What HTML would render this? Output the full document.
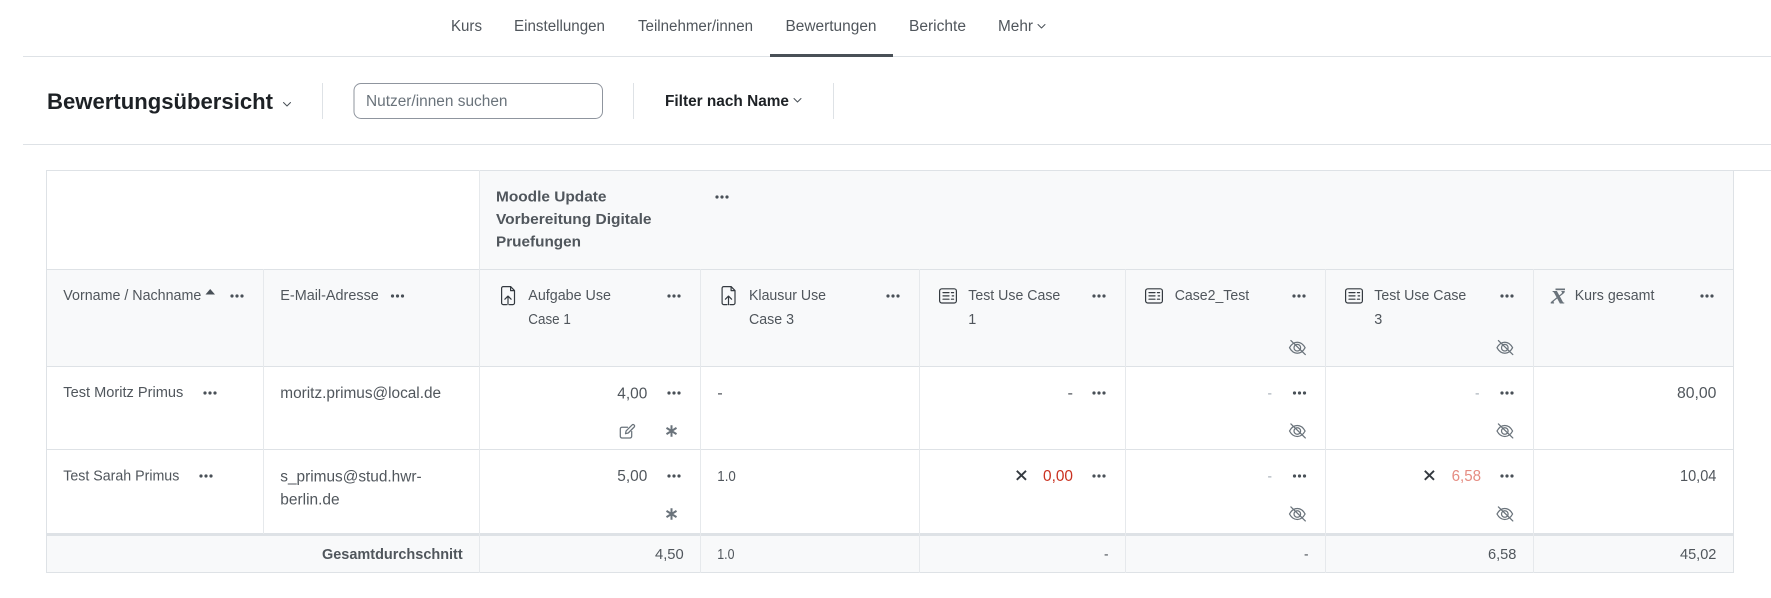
<!DOCTYPE html>
<html lang="de"><head><meta charset="utf-8"><title>Bewertungsübersicht</title>
<style>
html,body{margin:0;padding:0;width:1771px;height:598px;overflow:hidden;background:#fff}
svg{display:block}
text{font-family:"Liberation Sans",sans-serif;fill:#50565c;font-size:15.4px}
.n{font-size:15.4px;fill:#50565c}
.h{font-size:14.4px}
.f{font-size:14.4px}
.b{font-weight:bold}
.ic{fill:none;stroke:#343a40;stroke-width:1.2;stroke-linecap:round;stroke-linejoin:round}
.gr{fill:none;stroke:#6a737b;stroke-width:1.25;stroke-linecap:round;stroke-linejoin:round}
</style></head><body>
<svg width="1771" height="598" viewBox="0 0 1771 598" xmlns="http://www.w3.org/2000/svg">
<defs>
<g id="d"><circle cx="2" cy="0" r="1.6" fill="#495057"/><circle cx="7" cy="0" r="1.6" fill="#495057"/><circle cx="12" cy="0" r="1.6" fill="#495057"/></g>
<g id="up" class="ic"><path d="M5.500 18.600H2.200A1.600 1.600 0 0 1 .6 17V2.200A1.600 1.600 0 0 1 2.200.6h7.400l3.900 4V17a1.600 1.600 0 0 1-1.600 1.600H8.500"/><path d="M9.600.8v3.800h3.700"/><path d="M7 18.600V10.400M3.900 13.200 7 10.100l3.100 3.100"/></g>
<g id="q" class="ic"><rect x=".6" y=".6" width="16.800" height="14.200" rx="2.200"/><path d="M4 4.400h6M4 7.700h6M4 11h6M12.400 4.400h2.200M13.200 7.700h1.400M12.400 11h2.200"/></g>
<g id="e" class="gr"><path d="M1 7.500C3 3.800 5.800 2 8.800 2s5.800 1.800 7.800 5.500c-2 3.700-4.800 5.500-7.800 5.500S3 11.200 1 7.500z"/><circle cx="8.800" cy="7.500" r="3.300"/><path d="M2.400.4 16.800 14.400"/></g>
<g id="a" fill="none" stroke="#6a737b" stroke-width="2"><path d="M5.500 -.4V11M.5 2.200 10.500 8.400M10.500 2.200.5 8.400"/></g>
<g id="c" fill="none" stroke="#495057" stroke-width="1" stroke-linecap="round" stroke-linejoin="round"><path d="M0 0 3.500 3.500 7 0"/></g>
</defs>

<!-- nav -->
<rect x="23" y="56" width="1748" height="1" fill="#dee2e6"/>
<rect x="770" y="54" width="123" height="3" fill="#495057"/>
<text class="n" x="451" y="31" textLength="31" lengthAdjust="spacingAndGlyphs">Kurs</text>
<text class="n" x="514" y="31" textLength="91" lengthAdjust="spacingAndGlyphs">Einstellungen</text>
<text class="n" x="638" y="31" textLength="115" lengthAdjust="spacingAndGlyphs">Teilnehmer/innen</text>
<text class="n" x="785.500" y="31" textLength="91" lengthAdjust="spacingAndGlyphs">Bewertungen</text>
<text class="n" x="909" y="31" textLength="57" lengthAdjust="spacingAndGlyphs">Berichte</text>
<text class="n" x="998" y="31" textLength="35" lengthAdjust="spacingAndGlyphs">Mehr</text>
<use href="#c" x="1038" y="24.500"/>

<!-- toolbar -->
<rect x="23" y="144" width="1748" height="1" fill="#dee2e6"/>
<text x="47" y="109" textLength="226" lengthAdjust="spacingAndGlyphs" class="b" style="font-size:22.600px;fill:#1d2125">Bewertungsübersicht</text>
<use href="#c" x="283.500" y="102.500"/>
<rect x="322" y="83" width="1" height="36" fill="#dee2e6"/>
<rect x="354" y="83.500" width="248.500" height="35" rx="7" fill="#fff" stroke="#8f959e" stroke-width="1"/>
<text x="366" y="106" textLength="141.500" lengthAdjust="spacingAndGlyphs" style="font-size:15.400px;fill:#6a737b">Nutzer/innen suchen</text>
<rect x="633" y="83" width="1" height="36" fill="#dee2e6"/>
<text x="665" y="106" textLength="124" lengthAdjust="spacingAndGlyphs" class="b" style="font-size:15.400px;fill:#1d2125">Filter nach Name</text>
<use href="#c" x="794" y="98.500"/>
<rect x="833" y="83" width="1" height="36" fill="#dee2e6"/>

<!-- table backgrounds -->
<rect x="480" y="171" width="1253" height="99" fill="#f8f9fa"/>
<rect x="47" y="270" width="1686" height="96" fill="#f8f9fa"/>
<rect x="47" y="536" width="1686" height="36" fill="#f8f9fa"/>

<!-- table lines -->
<rect x="46" y="170" width="1725" height="1" fill="#dee2e6"/>
<rect x="46" y="269" width="1688" height="1" fill="#dee2e6"/>
<rect x="46" y="366" width="1688" height="1" fill="#dee2e6"/>
<rect x="46" y="449" width="1688" height="1" fill="#dee2e6"/>
<rect x="46" y="533" width="1688" height="3" fill="#dee2e6"/>
<rect x="46" y="572" width="1688" height="1" fill="#dee2e6"/>
<rect x="46" y="170" width="1" height="403" fill="#dee2e6"/>
<rect x="1733" y="170" width="1" height="403" fill="#dee2e6"/>
<rect x="479" y="170" width="1" height="403" fill="#e6e9ec"/>
<rect x="263" y="269" width="1" height="265" fill="#e6e9ec"/>
<rect x="700" y="269" width="1" height="304" fill="#e6e9ec"/>
<rect x="919" y="269" width="1" height="304" fill="#e6e9ec"/>
<rect x="1125" y="269" width="1" height="304" fill="#e6e9ec"/>
<rect x="1325" y="269" width="1" height="304" fill="#e6e9ec"/>
<rect x="1533" y="269" width="1" height="304" fill="#e6e9ec"/>

<!-- category header -->
<text class="h b" x="496" y="201.500" textLength="110.500" lengthAdjust="spacingAndGlyphs">Moodle Update</text>
<text class="h b" x="496" y="224" textLength="155.500" lengthAdjust="spacingAndGlyphs">Vorbereitung Digitale</text>
<text class="h b" x="496" y="246.500" textLength="85" lengthAdjust="spacingAndGlyphs">Pruefungen</text>
<use href="#d" x="715" y="197"/>

<!-- column headers -->
<text class="h" x="63.300" y="300" textLength="138" lengthAdjust="spacingAndGlyphs">Vorname / Nachname</text>
<path d="M205.500 294.500 210.200 289 215 294.500z" fill="#495057"/>
<use href="#d" x="230" y="296"/>
<text class="h" x="280.300" y="300" textLength="98.500" lengthAdjust="spacingAndGlyphs">E-Mail-Adresse</text>
<use href="#d" x="390.500" y="296"/>

<use href="#up" x="501" y="286"/>
<text class="h" x="528.300" y="300" textLength="82.700" lengthAdjust="spacingAndGlyphs">Aufgabe Use</text>
<text class="h" x="528.300" y="324" textLength="42.500" lengthAdjust="spacingAndGlyphs">Case 1</text>
<use href="#d" x="667" y="296"/>

<use href="#up" x="721.500" y="286"/>
<text class="h" x="749" y="300" textLength="77" lengthAdjust="spacingAndGlyphs">Klausur Use</text>
<text class="h" x="749" y="324" textLength="45" lengthAdjust="spacingAndGlyphs">Case 3</text>
<use href="#d" x="886" y="296"/>

<use href="#q" x="939" y="288.200"/>
<text class="h" x="968.300" y="300" textLength="92" lengthAdjust="spacingAndGlyphs">Test Use Case</text>
<text class="h" x="968.300" y="324">1</text>
<use href="#d" x="1092" y="296"/>

<use href="#q" x="1145" y="288.200"/>
<text class="h" x="1174.700" y="300" textLength="74.500" lengthAdjust="spacingAndGlyphs">Case2_Test</text>
<use href="#d" x="1292" y="296"/>
<use href="#e" x="1288.500" y="340.200"/>

<use href="#q" x="1345" y="288.200"/>
<text class="h" x="1374.300" y="300" textLength="92" lengthAdjust="spacingAndGlyphs">Test Use Case</text>
<text class="h" x="1374.300" y="324">3</text>
<use href="#d" x="1500" y="296"/>
<use href="#e" x="1496" y="340.200"/>

<text x="1551" y="303.500" textLength="14.500" lengthAdjust="spacingAndGlyphs" style="font-family:'Liberation Serif',serif;font-style:italic;font-weight:bold;font-size:27px;fill:#6a737b">x</text>
<rect x="1555.500" y="288.500" width="9.500" height="1.700" fill="#6a737b"/>
<text class="h" x="1574.700" y="300" textLength="79.700" lengthAdjust="spacingAndGlyphs">Kurs gesamt</text>
<use href="#d" x="1700" y="296"/>

<!-- row 1 -->
<text class="h" x="63.300" y="397" textLength="120" lengthAdjust="spacingAndGlyphs">Test Moritz Primus</text>
<use href="#d" x="203" y="393"/>
<text class="n" x="280.300" y="398" textLength="160.800" lengthAdjust="spacingAndGlyphs">moritz.primus@local.de</text>
<text class="n" x="617.300" y="398.300" textLength="30" lengthAdjust="spacingAndGlyphs">4,00</text>
<use href="#d" x="667" y="393"/>
<g class="gr"><path d="M627.500 427.200h-5.500a1.700 1.700 0 0 0-1.700 1.700v7.400a1.700 1.700 0 0 0 1.700 1.700h8a1.700 1.700 0 0 0 1.700-1.700v-4.800"/><path d="M625.500 433.700l.6-2.800 6-6a1.300 1.300 0 0 1 1.900 0l.2.200a1.300 1.300 0 0 1 0 1.900l-6 6z"/></g>
<use href="#a" x="666" y="425.700"/>
<text class="n" x="717.300" y="398" textLength="5.500" lengthAdjust="spacingAndGlyphs">-</text>
<text class="n" x="1067.500" y="398" textLength="5.500" lengthAdjust="spacingAndGlyphs">-</text>
<use href="#d" x="1092" y="393"/>
<text class="n" x="1267.500" y="398" textLength="4.500" lengthAdjust="spacingAndGlyphs" style="fill:#adb5bd">-</text>
<use href="#d" x="1292.500" y="393"/>
<use href="#e" x="1288.500" y="423.500"/>
<text class="n" x="1475" y="398" textLength="4.500" lengthAdjust="spacingAndGlyphs" style="fill:#adb5bd">-</text>
<use href="#d" x="1500" y="393"/>
<use href="#e" x="1496" y="423.500"/>
<text class="n" x="1677" y="398" textLength="39.400" lengthAdjust="spacingAndGlyphs">80,00</text>

<!-- row 2 -->
<text class="h" x="63.300" y="480.500" textLength="116" lengthAdjust="spacingAndGlyphs">Test Sarah Primus</text>
<use href="#d" x="199" y="476"/>
<text class="n" x="280.300" y="481.500" textLength="141.300" lengthAdjust="spacingAndGlyphs">s_primus@stud.hwr-</text>
<text class="n" x="280.300" y="504.500" textLength="59.300" lengthAdjust="spacingAndGlyphs">berlin.de</text>
<text class="n" x="617.300" y="481" textLength="30" lengthAdjust="spacingAndGlyphs">5,00</text>
<use href="#d" x="667" y="476"/>
<use href="#a" x="666" y="508.700"/>
<text class="h" x="717.300" y="481" textLength="18.500" lengthAdjust="spacingAndGlyphs" style="font-size:15px">1.0</text>
<path d="M1016.800 470.800 1026 479.800M1026 470.800 1016.800 479.800" stroke="#343a40" stroke-width="1.900" fill="none"/>
<text class="n" x="1043" y="481" textLength="30" lengthAdjust="spacingAndGlyphs" style="fill:#ca3120">0,00</text>
<use href="#d" x="1092" y="476"/>
<text class="n" x="1267.500" y="481" textLength="4.500" lengthAdjust="spacingAndGlyphs" style="fill:#adb5bd">-</text>
<use href="#d" x="1292.500" y="476"/>
<use href="#e" x="1288.500" y="506.500"/>
<path d="M1424.800 470.800 1434 479.800M1434 470.800 1424.800 479.800" stroke="#343a40" stroke-width="1.900" fill="none"/>
<text class="n" x="1451.600" y="481" textLength="29.500" lengthAdjust="spacingAndGlyphs" style="fill:#e58c82">6,58</text>
<use href="#d" x="1500" y="476"/>
<use href="#e" x="1496" y="506.500"/>
<text class="n" x="1680" y="481" textLength="36.400" lengthAdjust="spacingAndGlyphs">10,04</text>

<!-- footer -->
<text class="f b" x="322" y="559" textLength="140.700" lengthAdjust="spacingAndGlyphs">Gesamtdurchschnitt</text>
<text class="f" x="655" y="559" textLength="28.700" lengthAdjust="spacingAndGlyphs">4,50</text>
<text class="f" x="717.300" y="559" textLength="17.200" lengthAdjust="spacingAndGlyphs">1.0</text>
<text class="f" x="1104" y="559" textLength="4.500" lengthAdjust="spacingAndGlyphs">-</text>
<text class="f" x="1304" y="559" textLength="4.500" lengthAdjust="spacingAndGlyphs">-</text>
<text class="f" x="1488" y="559" textLength="28.400" lengthAdjust="spacingAndGlyphs">6,58</text>
<text class="f" x="1680" y="559" textLength="36.400" lengthAdjust="spacingAndGlyphs">45,02</text>
</svg>
</body></html>
